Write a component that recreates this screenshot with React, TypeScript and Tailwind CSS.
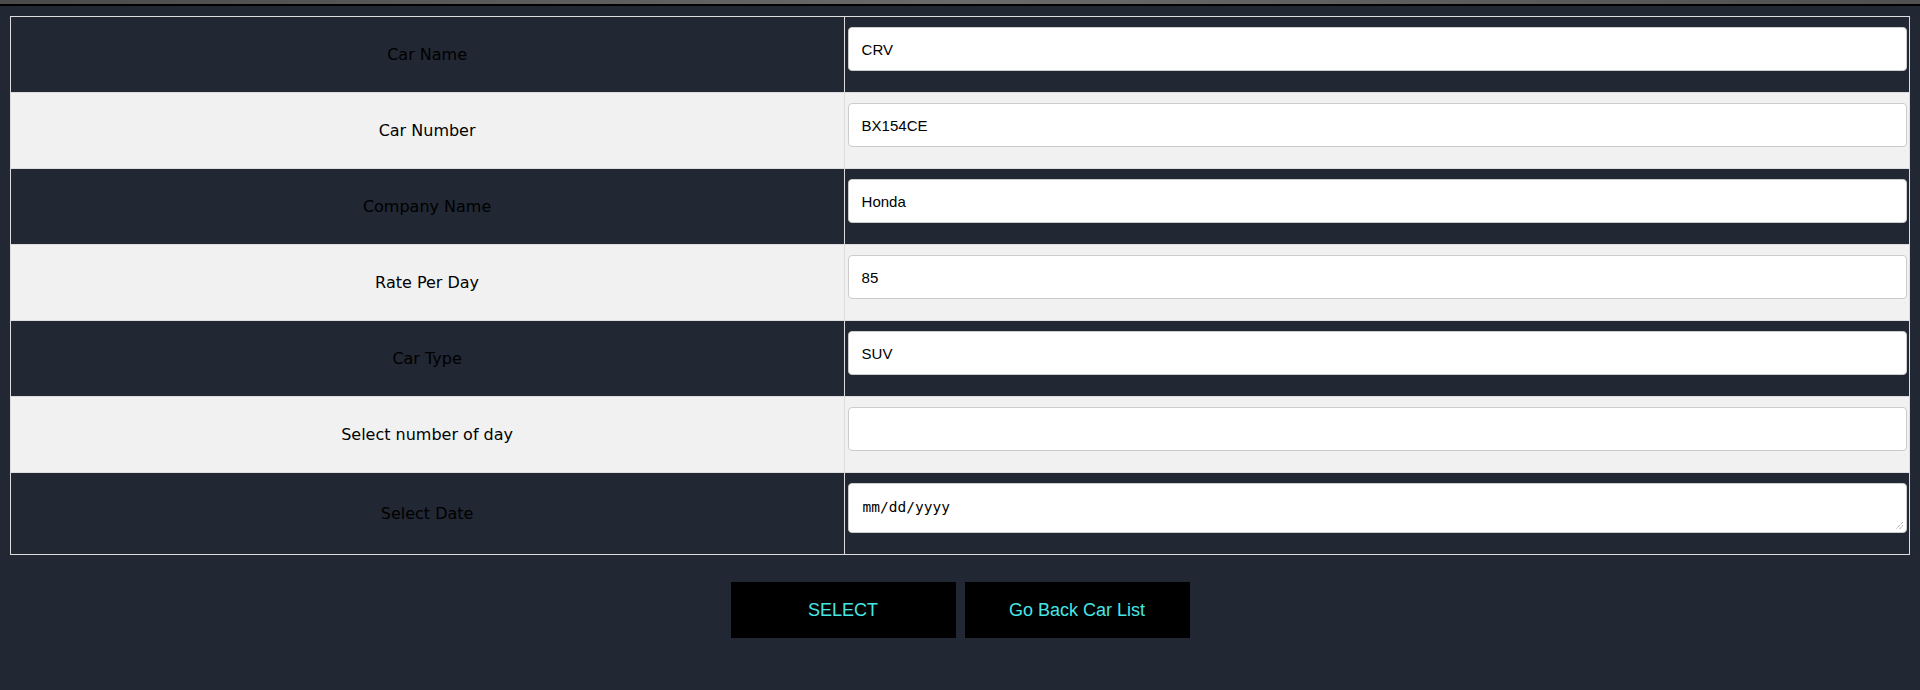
const FIELDS = [
  { label: "Car Name", value: "CRV" },
  { label: "Car Number", value: "BX154CE" },
  { label: "Company Name", value: "Honda" },
  { label: "Rate Per Day", value: "85" },
  { label: "Car Type", value: "SUV" },
  { label: "Select number of day", value: "" },
];

function Grip() {
  return (
    <svg width="10" height="10" viewBox="0 0 10 10" className="absolute bottom-[2px] right-[2px]">
      <path d="M9 2 L2 9 M9 5.5 L5.5 9" stroke="#777" strokeWidth="1" strokeDasharray="1 1" />
    </svg>
  );
}

export default function App() {
  return (
    <div className="flex min-h-[690px] flex-col bg-[#212733]">
      <div className="h-[4px] bg-gradient-to-r from-[#4a4a4a] via-[#6a6a6a] to-[#505050]" />
      <div className="h-[2px] bg-black" />

      <table className="mx-auto mt-[10px] w-[99%] border-collapse border border-[#ddd]">
        <tbody>
          {FIELDS.map((f, i) => (
            <tr
              key={f.label}
              className={`border-b border-[#ddd] ${i % 2 === 0 ? "bg-[#212733]" : "bg-[#f1f1f1]"}`}
            >
              <td className="w-[834px] border-r border-[#ddd] p-0 text-center align-middle font-['DejaVu_Sans',sans-serif] text-[16px] text-black">
                {f.label}
              </td>
              <td className="pt-[10px] pb-[21px] pl-[3px] pr-[2px]">
                <input
                  readOnly
                  value={f.value}
                  className="block h-[44px] w-full rounded-[4px] border border-[#ccc] bg-white pl-[13px] font-['Liberation_Sans',Arial,sans-serif] text-[15px] text-black outline-none"
                />
              </td>
            </tr>
          ))}
          <tr className="bg-[#212733]">
            <td className="w-[834px] border-r border-[#ddd] p-0 text-center align-middle font-['DejaVu_Sans',sans-serif] text-[16px] text-black">
              Select Date
            </td>
            <td className="pt-[10px] pb-[21px] pl-[3px] pr-[2px]">
              <div className="relative flex h-[50px] w-full items-center rounded-[4px] border border-[#ccc] bg-white pl-[14px] font-['DejaVu_Sans_Mono',monospace] text-[14.5px] text-black">
                mm/dd/yyyy
                <Grip />
              </div>
            </td>
          </tr>
        </tbody>
      </table>

      <div className="mt-[27px] flex justify-center gap-[9px]">
        <button className="h-[56px] w-[225px] bg-black font-['Liberation_Sans',Arial,sans-serif] text-[18px] text-[#46e6e6]">
          SELECT
        </button>
        <button className="h-[56px] w-[225px] bg-black font-['Liberation_Sans',Arial,sans-serif] text-[18px] text-[#46e6e6]">
          Go Back Car List
        </button>
      </div>
    </div>
  );
}
